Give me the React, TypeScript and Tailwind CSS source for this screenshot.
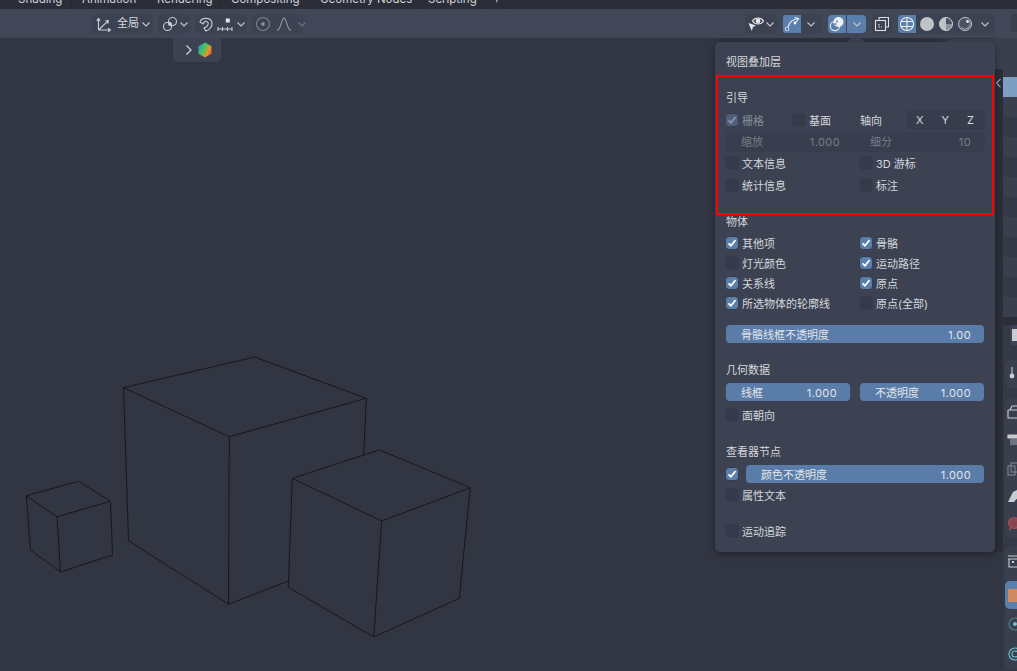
import React from "react";

const Chev = ({ dim = false }: { dim?: boolean }) => (
  <svg width="10" height="10" viewBox="0 0 10 10" className="shrink-0" fill="none" stroke={dim ? "#6f7584" : "#c4c7cd"} strokeWidth="1.1">
    <path d="M1.5 3.5 L5 7 L8.5 3.5" />
  </svg>
);

const Check = ({ dim = false }: { dim?: boolean }) => (
  <svg width="12" height="12" viewBox="0 0 12 12" fill="none" stroke={dim ? "#8b95a8" : "#ffffff"} strokeWidth="1.7">
    <path d="M2.5 6.3 L4.9 8.7 L9.5 3.1" />
  </svg>
);

const Box = ({ on = false, dim = false }: { on?: boolean; dim?: boolean }) => (
  <div
    className={
      "w-[14px] h-[14px] shrink-0 ml-[-1px] rounded-[4px] border border-[#363c4b] " +
      (on ? (dim ? "bg-[#4d5f7b]" : "bg-[#5a7fab]") : "bg-[#353b4a]")
    }
  >
    {on && <Check dim={dim} />}
  </div>
);

const Opt = ({ label, on = false, dim = false, w }: { label: string; on?: boolean; dim?: boolean; w?: string }) => (
  <div className={"flex items-center h-full gap-[3px] " + (w ?? "")}>
    <Box on={on} dim={dim} />
    <span className={"mt-[2px] " + (dim ? "text-[#858b98]" : "text-[#d6d8dc]")}>{label}</span>
  </div>
);

const Slider = ({ label, value, cls = "" }: { label: string; value: string; cls?: string }) => (
  <div className={"flex items-center justify-between h-[18px] rounded-[4px] bg-[#5a7ca8] pt-[2px] pl-[15px] pr-[13px] text-[#e3e5e9] " + cls}>
    <span>{label}</span>
    <span className="tracking-[0.4px]">{value}</span>
  </div>
);

const Two = ({ l, r }: { l: React.ReactNode; r: React.ReactNode }) => (
  <div className="flex h-[20px]">
    <div className="w-[134px]">{l}</div>
    <div>{r}</div>
  </div>
);

const Head = ({ t, cls }: { t: string; cls: string }) => (
  <div className={"h-[20px] pt-[2px] flex items-center text-[#d6d8dc] " + cls}>{t}</div>
);

const Pill = ({ children, cls = "" }: { children: React.ReactNode; cls?: string }) => (
  <div className={"flex items-center h-[20px] rounded-[5px] bg-[#3c4251] " + cls}>{children}</div>
);

const I = ({ children, w = 16 }: { children: React.ReactNode; w?: number }) => (
  <svg width={w} height="16" viewBox={`0 0 ${w} 16`} fill="none" stroke="#c9ccd2" strokeWidth="1.1" className="shrink-0">
    {children}
  </svg>
);

const Cubes = () => (
  <svg className="absolute left-0 top-[-38px]" width="995" height="671" viewBox="0 0 995 671" fill="none" stroke="#16181e" strokeWidth="1">
    <path d="M26.3 495.7 L78.5 481.3 L110.5 501.3 L57 516.7 Z M26.3 495.7 L30.5 550 L60.5 572 L112.5 555 L110.5 501.3 M57 516.7 L60.5 572" />
    <path d="M123.5 387.7 L254.5 357 L366.3 398.3 L229.3 436.7 Z M123.5 387.7 L128.5 540.7 L228.5 604.3 L288.3 581 M229.3 436.7 L228.5 604.3 M366.3 398.3 L363.7 455" />
    <path d="M292.3 478.3 L379.3 450 L470.3 487.7 L381.7 521 Z M292.3 478.3 L288.3 587.3 L373.7 637 L459.3 598.3 L470.3 487.7 M381.7 521 L373.7 637" />
  </svg>
);

const Tab = ({ t, w, pl = "pl-[10px]" }: { t: string; w: string; pl?: string }) => (
  <div className={"h-full shrink-0 relative border-r border-[#272a33] flex items-end " + pl + " " + w}>
    <span className="text-[11.5px] leading-[14px] text-[#d0d2d7] whitespace-nowrap mb-[3px]">{t}</span>
  </div>
);

const Row = ({ cls = "bg-[#3a3f4e]", h }: { cls?: string; h: string }) => <div className={h + " " + cls} />;

const StripIcon = ({ children, cls = "" }: { children: React.ReactNode; cls?: string }) => (
  <div className={"flex items-center h-[28px] pl-[2px] " + cls}>{children}</div>
);

export default function App() {
  return (
    <div className="relative w-[1017px] h-[671px] overflow-hidden flex bg-[#323642] [font-family:Inter,'Noto_Sans_CJK_SC',sans-serif] text-[11px]">
      <div className="w-[1003px] h-full flex flex-col">
        <div className="h-[9px] bg-[#2b2e38] flex items-end overflow-hidden pl-[8px] shrink-0">
          <Tab t="Shading" w="w-[64px]" />
          <Tab t="Animation" w="w-[74px]" />
          <Tab t="Rendering" w="w-[75px]" pl="pl-[11px]" />
          <Tab t="Compositing" w="w-[89px]" />
          <Tab t="Geometry Nodes" w="w-[108px]" />
          <Tab t="Scripting" w="w-[68px]" />
          <Tab t="+" w="w-[20px]" pl="pl-[7px]" />
        </div>
        <div className="h-[29px] bg-[#414757] flex items-center pl-[92px] pr-[8px] shrink-0">
          <Pill cls="w-[61px] pl-[4px] gap-[5px] mr-[5px]">
            <I>
              <path d="M2.5 14 V3 M0.8 4.8 L2.5 2.5 L4.2 4.8 M2.5 14 H14 M12 12.2 L14.5 14 L12 15.8 M2.5 14 L12 5 M9.5 4.8 L12.3 4.6 L12 7.5" />
            </I>
            <span className="text-[#d6d8dc] w-[22px] whitespace-nowrap">全局</span>
            <span className="ml-[-3px]"><Chev /></span>
          </Pill>
          <Pill cls="w-[32px] pl-[4px] gap-[1px] mr-[5px]">
            <I>
              <circle cx="5.5" cy="10.5" r="4" />
              <circle cx="10.5" cy="5.5" r="4" />
              <circle cx="8" cy="8" r="1.4" fill="#c9ccd2" />
            </I>
            <Chev />
          </Pill>
          <Pill cls="w-[52px] pl-[3px] gap-[3px] mr-[5px]">
            <I>
              <path d="M2 6 C3 1.5 13 0.5 14 7 C14.5 11 11 14 8 15 L6 12 C9 11 11 8.5 10 6.5 C9 4.5 6 5 5 8 Z" />
            </I>
            <I>
              <path d="M1 11 V15 M1 13 H15 M5.5 11 V15 M10.5 11 V15 M15 11 V15" />
              <rect x="8.8" y="2.5" width="4" height="4" fill="#e3e4e7" stroke="none" />
            </I>
            <Chev />
          </Pill>
          <Pill cls="w-[51px] pl-[3px] gap-[5px]">
            <I>
              <circle cx="8" cy="8" r="6.5" stroke="#7f8491" />
              <circle cx="8" cy="8" r="1.8" fill="#9599a4" stroke="none" />
            </I>
            <I>
              <path d="M1 14.5 C5 14 5.5 2 8 2 C10.5 2 11 14 15 14.5" stroke="#9599a4" />
            </I>
            <Chev dim />
          </Pill>
          <Pill cls="w-[32px] ml-auto pl-[3px] mr-[6px]">
            <I>
              <path d="M4.5 5 C7 1 13 1 15.5 5 C13 9 7 9 4.5 5 Z" stroke="#e6e7ea" />
              <circle cx="10" cy="5" r="2.4" fill="#e6e7ea" stroke="none" />
              <path d="M0.5 7 L8 9.5 L5 11 L3.8 15 Z" fill="#e6e7ea" stroke="none" />
            </I>
            <span className="ml-[1px]"><Chev /></span>
          </Pill>
          <Pill cls="w-[39px] mr-[6px]">
            <div className="w-[18px] h-[18px] rounded-l-[3px] bg-[#5a7fab] flex items-center justify-center">
              <I>
                <circle cx="3" cy="13" r="1.8" />
                <circle cx="11" cy="7" r="1.4" fill="#fff" stroke="none" />
                <path d="M4 11.5 C5 6.5 8 3.5 14 2.5 M10.5 1.5 L14.5 2.5 L12.5 6" stroke="#eef0f3" />
              </I>
            </div>
            <span className="ml-[5px]"><Chev /></span>
          </Pill>
          <div className="flex h-[18px] w-[38px] rounded-[4px] bg-[#5a7fab] mr-[6px]">
            <div className="w-[19px] border-r border-[#3c4251] flex items-center justify-center">
              <I>
                <circle cx="6" cy="10" r="4.6" stroke="#e6e7ea" />
                <circle cx="9.5" cy="6" r="5" fill="#eef0f3" stroke="none" />
                <circle cx="8" cy="5.5" r="1" fill="#5a7fab" stroke="none" />
                <circle cx="6.5" cy="8" r="1" fill="#5a7fab" stroke="none" />
              </I>
            </div>
            <div className="flex-1 flex items-center justify-center"><Chev /></div>
          </div>
          <Pill cls="w-[20px] mr-[6px] justify-center">
            <I>
              <path d="M5 4 V1.5 H14.5 V11 H12" stroke="#dfe1e5" />
              <rect x="1.5" y="4.5" width="10" height="10" stroke="#dfe1e5" />
              <path d="M5 8 V11 H8" stroke="#dfe1e5" strokeDasharray="1.5 1" />
            </I>
          </Pill>
          <Pill cls="w-[97px]">
            <div className="w-[18px] h-[18px] rounded-l-[3px] bg-[#5a7fab] flex items-center justify-center">
              <I>
                <circle cx="8" cy="8" r="6.5" stroke="#eef0f3" />
                <path d="M2 5.5 H14 M2 10.5 H14 M8 1.5 V14.5" stroke="#eef0f3" />
              </I>
            </div>
            <div className="w-[19px] ml-[1px] flex justify-center">
              <div className="w-[14px] h-[14px] rounded-full bg-[#bfc2c8]" />
            </div>
            <div className="w-[19px] flex justify-center">
              <svg width="14" height="14" viewBox="0 0 14 14">
                <circle cx="7" cy="7" r="6.5" fill="#bfc2c8" stroke="#c9ccd2" />
                <path d="M7 1 V7 H13 A6 6 0 0 0 7 1 Z" fill="#4c5261" />
                <path d="M7 7 H13 A6 6 0 0 1 7 13 Z" fill="#8d929e" />
              </svg>
            </div>
            <div className="w-[19px] flex justify-center">
              <svg width="14" height="14" viewBox="0 0 14 14">
                <circle cx="7" cy="7" r="6.5" fill="#4c5261" stroke="#c9ccd2" />
                <path d="M3 10 A5 5 0 0 0 10.5 10.5 A5 5 0 0 0 11 4" stroke="#8d929e" fill="none" strokeWidth="1.2" />
                <circle cx="9.5" cy="4.5" r="1.4" fill="#e6e7ea" />
              </svg>
            </div>
            <div className="flex-1 flex justify-center"><Chev /></div>
          </Pill>
        </div>
        <div className="relative flex-1 flex">
          <div className="relative flex-1 overflow-hidden">
            <Cubes />
          </div>
          <div className="w-[8px] h-full flex flex-col">
            <div className="h-[22px] bg-[#3a3f4e]" />
            <div className="h-[492px] bg-[#2b2e38] pt-[17px] text-[#9a9da6]">
              <svg width="7" height="12" viewBox="0 0 7 12" fill="none" stroke="#9a9da6" strokeWidth="1.1">
                <path d="M5.5 2 L1.5 6 L5.5 10" />
              </svg>
            </div>
          </div>
        </div>
      </div>

      <div className="w-[14px] h-full flex flex-col bg-[#2b2e38] overflow-hidden">
        <div className="h-[9px] shrink-0" />
        <div className="h-[29px] shrink-0 bg-[#414757] pt-[5px] pl-[8px]">
          <div className="h-[18px] rounded-l-[4px] bg-[#3a3f4e]" />
        </div>
        <div className="h-[279px] shrink-0 flex flex-col bg-[#3a3f4e]">
          <Row h="h-[39px]" />
          <Row h="h-[20px]" cls="bg-[#7e9ec2]" />
          <Row h="h-[20px]" />
          <Row h="h-[20px]" cls="bg-[#343946]" />
          <Row h="h-[20px]" />
          <Row h="h-[20px]" cls="bg-[#343946]" />
          <Row h="h-[20px]" />
          <Row h="h-[20px]" cls="bg-[#343946]" />
          <Row h="h-[20px]" />
          <Row h="h-[20px]" cls="bg-[#343946]" />
          <Row h="h-[20px]" />
          <Row h="h-[20px]" cls="bg-[#343946]" />
        </div>
        <div className="h-[8px] shrink-0" />
        <div className="flex-1 bg-[#343946] pl-[2px]">
          <div className="h-[20px] ml-[5px] rounded-l-[4px] bg-[#3f4554] flex items-center">
            <div className="w-[5px] h-[12px] ml-[2px] bg-[#c9ccd2]" />
          </div>
          <div className="mt-[15px] rounded-l-[6px] bg-[#3a3f4e] flex flex-col">
            <StripIcon cls="h-[25px]">
              <I w={12}>
                <path d="M5 1 V8" />
                <circle cx="5" cy="10" r="2.4" fill="#c9ccd2" stroke="none" />
              </I>
            </StripIcon>
          </div>
          <div className="mt-[10px] rounded-l-[6px] bg-[#3a3f4e] flex flex-col">
            <StripIcon><I w={12}><path d="M1 6 H12 M1 6 V14 H12 M3 6 L5 2 H12" /></I></StripIcon>
            <StripIcon><I w={12}><path d="M1 3 H12 V6 H1 Z" fill="#c9ccd2" /><rect x="3" y="7" width="9" height="6" fill="#6d7382" stroke="none" /></I></StripIcon>
            <StripIcon><I w={12}><rect x="1" y="6" width="7" height="9" stroke="#7f8491" /><rect x="4" y="3" width="8" height="9" stroke="#7f8491" /></I></StripIcon>
            <StripIcon><I w={12}><path d="M1 14 L6 4 L12 1 V8 L7 14 Z" fill="#c9ccd2" stroke="none" /></I></StripIcon>
            <StripIcon><I w={12}><circle cx="7" cy="7" r="5.5" fill="#8a4450" stroke="#a5505e" /><path d="M2 14 L5 11 M12 14 L9 11" stroke="#a5505e" /></I></StripIcon>
          </div>
          <div className="mt-[8px] rounded-l-[6px] bg-[#3a3f4e] flex flex-col">
            <StripIcon cls="h-[30px]"><I w={12}><path d="M1 3 H12 M1 6 H12 M2 6 V14 H12" /><rect x="5" y="8" width="2" height="2" fill="#c9ccd2" stroke="none" /></I></StripIcon>
            <div className="mt-[5px] h-[28px] rounded-l-[5px] bg-[#5a7fab] flex items-center pl-[3px]">
              <div className="w-[9px] h-[13px] bg-[#d08a62]" />
            </div>
            <StripIcon cls="h-[30px]"><I w={12}><circle cx="8" cy="8" r="6" stroke="#4f7f8c" /><circle cx="8" cy="8" r="2" fill="#6fc0cf" stroke="none" /></I></StripIcon>
            <StripIcon cls="h-[30px]"><I w={12}><circle cx="8" cy="8" r="6" stroke="#6fc0cf" /><circle cx="8" cy="8" r="3" stroke="#6fc0cf" /></I></StripIcon>
          </div>
        </div>
      </div>

      {/* tool options popover tab */}
      <div className="absolute left-[173px] top-[38px] w-[48px] h-[24px] rounded-b-[5px] bg-[#3c4252] flex items-center pl-[12px] gap-[5px]">
        <svg width="8" height="12" viewBox="0 0 8 12" fill="none" stroke="#d6d8dc" strokeWidth="1.2">
          <path d="M1.5 1.5 L6 6 L1.5 10.5" />
        </svg>
        <svg width="14" height="16" viewBox="0 0 14 16">
          <defs>
            <linearGradient id="hx" x1="0" y1="0.2" x2="1" y2="0.8">
              <stop offset="0" stopColor="#12a8c8" />
              <stop offset="0.45" stopColor="#5cc04c" />
              <stop offset="0.75" stopColor="#e8932a" />
              <stop offset="1" stopColor="#e2483a" />
            </linearGradient>
          </defs>
          <polygon points="7,0.5 13.5,4.2 13.5,11.8 7,15.5 0.5,11.8 0.5,4.2" fill="url(#hx)" />
        </svg>
      </div>

      {/* overlays popover */}
      <div className="absolute left-[720px] top-[38px] w-[218px] h-[5px] bg-[#2d313c]" />
      <div className="absolute left-[946px] top-[39px] w-[57px] h-[30px] rounded-t-[5px] bg-[#3a3f4e]" />
      <div className="absolute left-[847px] top-[34px] w-0 h-0 border-x-[9px] border-x-transparent border-b-[8px] border-b-[#3c4252]" />
      <div className="absolute left-[715px] top-[42px] w-[280px] h-[510px] rounded-[5px] bg-[#3c4252] pt-[9px] pl-[11px] pr-[11px] shadow-[0_2px_6px_rgba(0,0,0,0.35)]">
        <Head t="视图叠加层" cls="" />
        <Head t="引导" cls="mt-[16px]" />
        <div className="flex items-center h-[20px] mt-[3px] mr-[-1px]">
          <Opt label="栅格" on dim w="w-[67px]" />
          <Opt label="基面" w="w-[67px]" />
          <span className="w-[47px] mt-[2px] text-[#d6d8dc]">轴向</span>
          <div className="flex-1 h-[20px] rounded-[4px] bg-[#373d4d] flex items-center justify-around pr-[2px] text-[#d6d8dc]">
            <span>X</span><span>Y</span><span>Z</span>
          </div>
        </div>
        <div className="flex h-[20px] mt-[2px] mx-[-1px] rounded-[4px] bg-[#383e4d] text-[#777d8b]">
          <div className="w-[130px] flex items-center justify-between pl-[16px] pr-[14px] border-r border-[#343a48]">
            <span>缩放</span><span className="tracking-[0.4px]">1.000</span>
          </div>
          <div className="flex-1 flex items-center justify-between pl-[15px] pr-[14px]">
            <span>细分</span><span className="tracking-[0.4px]">10</span>
          </div>
        </div>
        <div className="mt-[1px]"><Two l={<Opt label="文本信息" />} r={<Opt label="3D 游标" />} /></div>
        <div className="mt-[2px]"><Two l={<Opt label="统计信息" />} r={<Opt label="标注" />} /></div>
        <Head t="物体" cls="mt-[16px]" />
        <div className="mt-[2px]"><Two l={<Opt label="其他项" on />} r={<Opt label="骨骼" on />} /></div>
        <Two l={<Opt label="灯光颜色" />} r={<Opt label="运动路径" on />} />
        <Two l={<Opt label="关系线" on />} r={<Opt label="原点" on />} />
        <Two l={<Opt label="所选物体的轮廓线" on />} r={<Opt label="原点(全部)" />} />
        <Slider label="骨骼线框不透明度" value="1.00" cls="mt-[12px]" />
        <Head t="几何数据" cls="mt-[16px]" />
        <div className="flex gap-[10px] mt-[4px]">
          <Slider label="线框" value="1.000" cls="flex-1" />
          <Slider label="不透明度" value="1.000" cls="flex-1" />
        </div>
        <div className="h-[20px] mt-[4px]"><Opt label="面朝向" /></div>
        <Head t="查看器节点" cls="mt-[16px]" />
        <div className="flex items-center gap-[7px] mt-[4px]">
          <Box on />
          <Slider label="颜色不透明度" value="1.000" cls="flex-1" />
        </div>
        <div className="h-[20px] mt-[2px]"><Opt label="属性文本" /></div>
        <div className="h-[20px] mt-[16px]"><Opt label="运动追踪" /></div>
      </div>

      {/* red annotation rectangle */}
      <div className="absolute left-[716px] top-[75px] w-[278px] h-[140px] border-2 border-[#ff0000]" />
    </div>
  );
}
